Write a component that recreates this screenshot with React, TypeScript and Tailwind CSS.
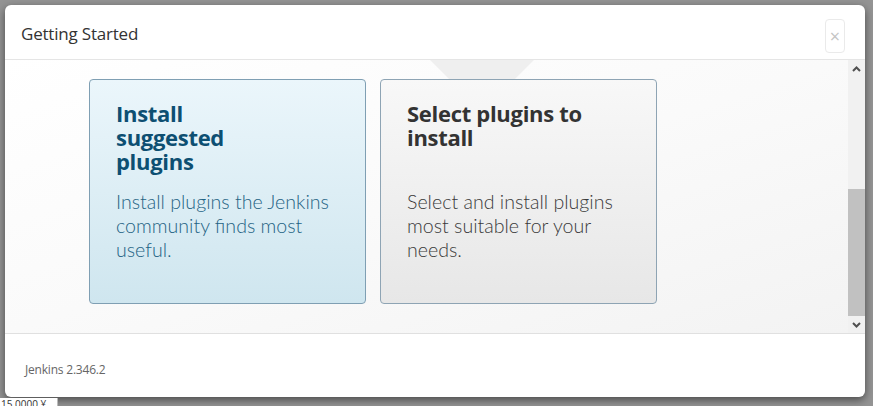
import React from "react";

export default function App() {
  const font = { fontFamily: '"Open Sans", "Noto Sans", sans-serif' };
  const light = { fontFamily: 'Lato, "Open Sans", sans-serif' };
  return (
    <div
      className="w-[873px] h-[406px] bg-[#949494] relative overflow-hidden pt-[5px] pl-[5px]"
      style={font}
    >
      <div className="w-[860px] h-[392px] bg-white rounded-[6px] flex flex-col overflow-hidden shadow-[0_3px_9px_rgba(0,0,0,0.5)]">
        {/* header */}
        <div className="h-[55px] shrink-0 border-b border-[#e5e5e5] flex items-center justify-between pl-[16px] pr-[20px]">
          <h4 className="text-[17px] text-[#333] leading-none tracking-[-0.2px] mt-[3px]">Getting Started</h4>
          <button className="w-[20px] h-[34px] mt-[7px] border border-[#eaeaea] rounded-[4px] flex items-center justify-center text-[#c4c4c4] text-[18px] leading-none">
            ×
          </button>
        </div>
        {/* body */}
        <div className="h-[274px] shrink-0 flex border-b border-[#e0e0e0]">
          <div className="flex-1 relative bg-gradient-to-br from-[#ffffff] via-[#fafafa] to-[#f3f3f3] overflow-hidden">
            <div className="absolute left-[425px] top-0 w-0 h-0 border-l-[52px] border-r-[52px] border-t-[52px] border-l-transparent border-r-transparent border-t-[#efefef]" />
            <div className="relative flex gap-[14px] pt-[19px] pl-[84px]">
              <div className="w-[277px] h-[225px] rounded-[4px] border border-[#7f9fb3] bg-gradient-to-b from-[#ebf6fb] to-[#cfe6ef] pl-[26px] pt-[21px] pr-[20px]">
                <h2 className="text-[22px] font-bold leading-[24px] text-[#0d4f72] min-h-[72px] max-w-[130px] tracking-[-0.3px]">
                  Install suggested plugins
                </h2>
                <p style={light} className="mt-[17px] text-[19.6px] font-light leading-[24px] text-[#1f6384]">
                  Install plugins the Jenkins community finds most useful.
                </p>
              </div>
              <div className="w-[277px] h-[225px] rounded-[4px] border border-[#8ea4b4] bg-gradient-to-b from-[#f8f8f8] to-[#e7e7e7] pl-[26px] pt-[21px] pr-[20px]">
                <h2 className="text-[22px] font-bold leading-[24px] text-[#333] min-h-[72px] tracking-[-0.3px]">
                  Select plugins to install
                </h2>
                <p style={light} className="mt-[17px] text-[19.6px] font-light leading-[24px] text-[#3a3a3a] max-w-[215px]">
                  Select and install plugins most suitable for your needs.
                </p>
              </div>
            </div>
          </div>
          {/* scrollbar */}
          <div className="w-[17px] shrink-0 bg-[#f1f1f1] flex flex-col">
            <div className="h-[17px] flex items-center justify-center">
              <svg width="9" height="6" viewBox="0 0 9 6">
                <path d="M1 5 L4.5 1.5 L8 5" stroke="#505050" strokeWidth="2" fill="none" />
              </svg>
            </div>
            <div className="h-[112px]" />
            <div className="h-[127px] bg-[#c1c1c1]" />
            <div className="flex-1 flex items-center justify-center">
              <svg width="9" height="6" viewBox="0 0 9 6">
                <path d="M1 1 L4.5 4.5 L8 1" stroke="#505050" strokeWidth="2" fill="none" />
              </svg>
            </div>
          </div>
        </div>
        {/* footer */}
        <div className="flex-1 flex items-center pl-[20px] pt-[9px]">
          <span className="text-[12px] text-[#666] tracking-[-0.2px]">Jenkins 2.346.2</span>
        </div>
      </div>
      <div className="absolute left-0 top-[398px] w-[58px] h-[8px] bg-white border-r border-[#bbb] overflow-hidden">
        <div className="text-[10px] leading-[10px] text-[#333] pl-[1px] pt-[1px]">15.0000 ¥</div>
      </div>
    </div>
  );
}
